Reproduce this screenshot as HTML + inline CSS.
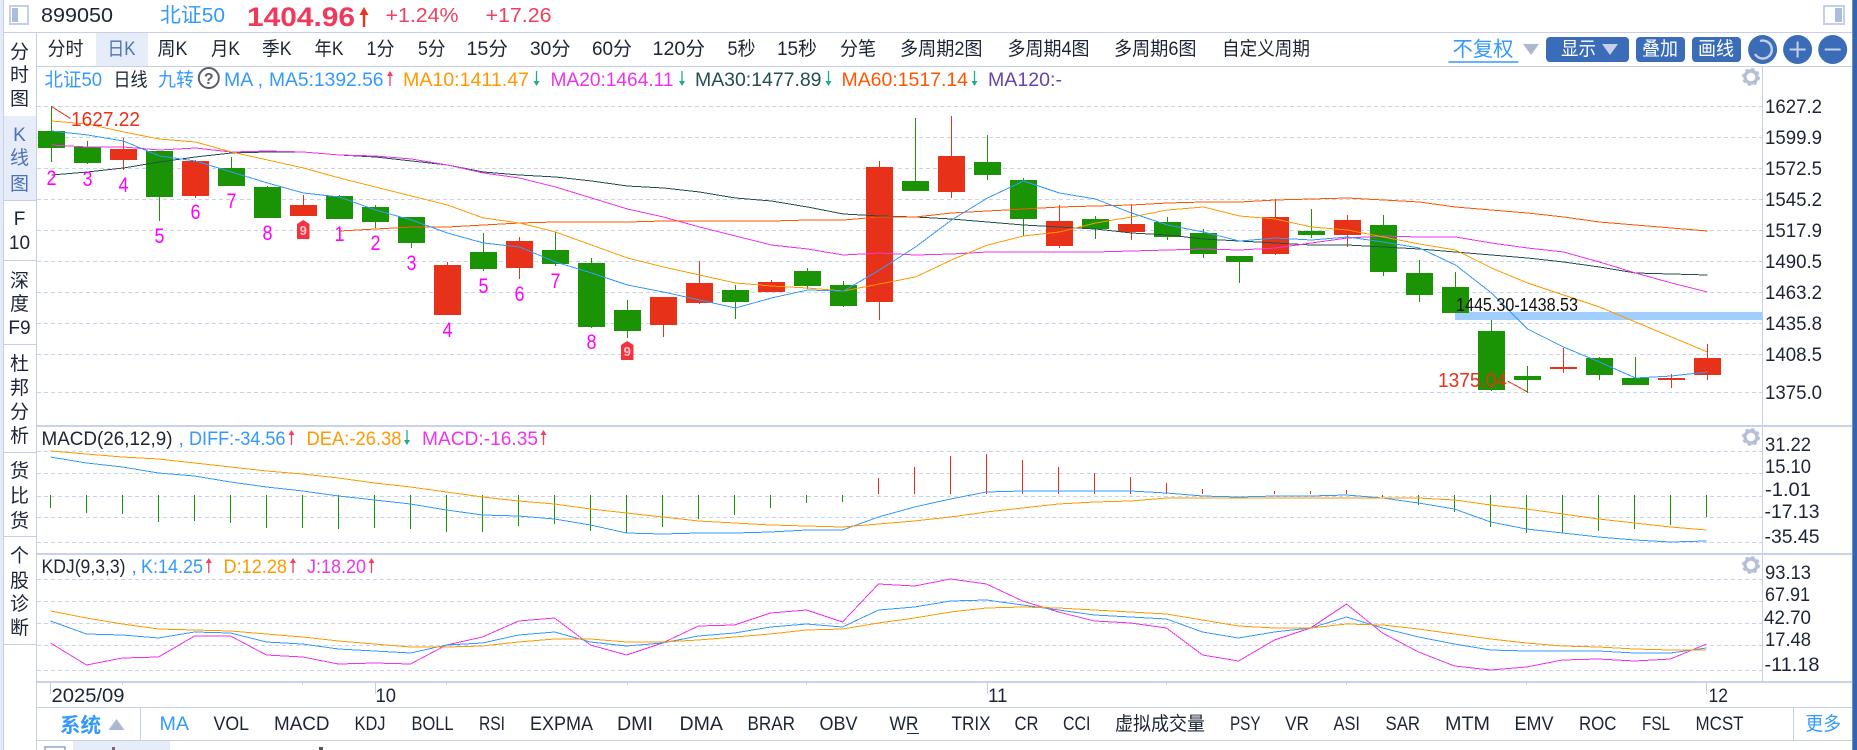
<!DOCTYPE html>
<html><head><meta charset="utf-8"><title>北证50</title>
<style>
html,body{margin:0;padding:0;background:#fff;width:1857px;height:750px;overflow:hidden}
svg{display:block}
text{font-family:"Liberation Sans","Noto Sans CJK SC",sans-serif;font-size:19px;fill:#1c2536}
.b{fill:#3399ff}.o{fill:#ff9900}.m{fill:#ee33ee}.w{fill:#fff}.n{fill:#ff00ff;font-size:21px}
.s{font-size:19px;text-anchor:middle}
</style></head><body>
<svg width="1857" height="750" viewBox="0 0 1857 750" xmlns="http://www.w3.org/2000/svg">
<defs>
<g id="u"><path d="M0 1V15" stroke="#f0405f" stroke-width="1.3"/><path d="M-3 5L0 0L3 5z" fill="#f0405f"/></g>
<g id="d"><path d="M0 0V14" stroke="#22a98c" stroke-width="1.3"/><path d="M-3 10L0 15L3 10z" fill="#22a98c"/></g>
<g id="gear"><circle r="6" fill="none" stroke="#b5c0d6" stroke-width="3.4"/><circle r="8" fill="none" stroke="#b5c0d6" stroke-width="2" stroke-dasharray="3.2 3.08"/></g>
</defs>
<rect width="1857" height="750" fill="#fff"/>
<!-- frame -->
<rect x="0" y="0" width="3" height="750" fill="#e4ebf8"/>
<rect x="1852" y="0" width="5" height="750" fill="#3564ae"/>
<rect x="1852" y="0" width="1" height="750" fill="#6d8ec6"/>
<path d="M3 32.5H1852M37 66.5H1852M36.5 33V750M3 200.5H36M3 260.5H36M3 344.5H36M3 452.5H36M3 536.5H36M3 644.5H36M3.5 0V750M37 707.5H1852M37 740.5H1852M140.5 708V740M1793.5 708V740M1762.5 67V682" stroke="#c5d0e6" stroke-width="1" fill="none" shape-rendering="crispEdges"/>
<rect x="4" y="116" width="32" height="84" fill="#e6ecf8"/>
<rect x="96" y="33" width="52" height="33" fill="#e6ecf8"/>
<rect x="73" y="741" width="97" height="9" fill="#e6ecf8"/>
<rect x="45" y="747" width="20" height="5" fill="none" stroke="#8fa3c8" stroke-width="1.5"/>
<rect x="112" y="747" width="3" height="3" fill="#7a6a70"/><rect x="319" y="747" width="4" height="3" fill="#555"/>
<!-- header -->
<rect x="10" y="6" width="18" height="18" fill="#fff" stroke="#c5d0e6" stroke-width="2"/><rect x="12" y="8" width="6" height="14" fill="#a9bedd"/>
<text x="41" y="22" style="font-size:20.5px" textLength="72" lengthAdjust="spacingAndGlyphs">899050</text>
<text x="160" y="22" class="b" style="font-size:20.5px" textLength="65" lengthAdjust="spacingAndGlyphs">北证50</text>
<text x="247" y="26" style="font-size:27px;font-weight:bold;fill:#f03a5c" textLength="108" lengthAdjust="spacingAndGlyphs">1404.96</text>
<path d="M364 12V27" stroke="#e8341c" stroke-width="2.4"/><path d="M359.5 15L364 7L368.5 15z" fill="#e8341c"/>
<text x="385.5" y="22" style="font-size:20.5px;fill:#f0405f" textLength="73" lengthAdjust="spacingAndGlyphs">+1.24%</text>
<text x="485.5" y="22" style="font-size:20.5px;fill:#f0405f" textLength="66" lengthAdjust="spacingAndGlyphs">+17.26</text>
<rect x="1824" y="6" width="20" height="18" fill="#fff" stroke="#c5d0e6" stroke-width="2"/><rect x="1835" y="8" width="7" height="14" fill="#a9bedd"/>
<!-- sidebar -->
<g>
<text class="s" x="19.5" y="58">分</text><text class="s" x="19.5" y="81">时</text><text class="s" x="19.5" y="105">图</text>
<text class="s" x="19.5" y="141" style="fill:#4a72b8">K</text><text class="s" x="19.5" y="164" style="fill:#4a72b8">线</text><text class="s" x="19.5" y="190" style="fill:#4a72b8">图</text>
<text class="s" x="19.5" y="225">F</text><text class="s" x="19.5" y="249">10</text>
<text class="s" x="19.5" y="287">深</text><text class="s" x="19.5" y="310">度</text><text class="s" x="19.5" y="334">F9</text>
<text class="s" x="19.5" y="370">杜</text><text class="s" x="19.5" y="394">邦</text><text class="s" x="19.5" y="418">分</text><text class="s" x="19.5" y="442">析</text>
<text class="s" x="19.5" y="477">货</text><text class="s" x="19.5" y="502">比</text><text class="s" x="19.5" y="527">货</text>
<text class="s" x="19.5" y="562">个</text><text class="s" x="19.5" y="587">股</text><text class="s" x="19.5" y="610">诊</text><text class="s" x="19.5" y="634">断</text>
</g>
<!-- toolbar -->
<g>
<text x="47.5" y="55" textLength="36" lengthAdjust="spacingAndGlyphs">分时</text>
<text x="107.5" y="55" textLength="28" lengthAdjust="spacingAndGlyphs" style="fill:#4a72b8">日K</text>
<text x="157.5" y="55" textLength="30" lengthAdjust="spacingAndGlyphs">周K</text>
<text x="211" y="55" textLength="29" lengthAdjust="spacingAndGlyphs">月K</text>
<text x="262" y="55" textLength="29.5" lengthAdjust="spacingAndGlyphs">季K</text>
<text x="314.5" y="55" textLength="29" lengthAdjust="spacingAndGlyphs">年K</text>
<text x="366.5" y="55" textLength="28" lengthAdjust="spacingAndGlyphs">1分</text>
<text x="418" y="55" textLength="27.5" lengthAdjust="spacingAndGlyphs">5分</text>
<text x="466.5" y="55" textLength="41.5" lengthAdjust="spacingAndGlyphs">15分</text>
<text x="530" y="55" textLength="40.5" lengthAdjust="spacingAndGlyphs">30分</text>
<text x="592" y="55" textLength="40" lengthAdjust="spacingAndGlyphs">60分</text>
<text x="652.5" y="55" textLength="52.5" lengthAdjust="spacingAndGlyphs">120分</text>
<text x="727.5" y="55" textLength="28" lengthAdjust="spacingAndGlyphs">5秒</text>
<text x="777" y="55" textLength="40" lengthAdjust="spacingAndGlyphs">15秒</text>
<text x="840" y="55" textLength="36" lengthAdjust="spacingAndGlyphs">分笔</text>
<text x="900" y="55" textLength="82.5" lengthAdjust="spacingAndGlyphs">多周期2图</text>
<text x="1007.5" y="55" textLength="82" lengthAdjust="spacingAndGlyphs">多周期4图</text>
<text x="1114" y="55" textLength="82.5" lengthAdjust="spacingAndGlyphs">多周期6图</text>
<text x="1222" y="55" textLength="88" lengthAdjust="spacingAndGlyphs">自定义周期</text>
<text x="1452.5" y="56" class="b" style="font-size:20.5px" textLength="61" lengthAdjust="spacingAndGlyphs">不复权</text>
</g>
<path d="M1448.5 62H1518.5" stroke="#3399ff" stroke-width="1.4"/>
<path d="M1523 44H1539L1531 55z" fill="#aab8d4"/>
<rect x="1546" y="37" width="83" height="25" rx="4" fill="#3a6cb8"/>
<text x="1561" y="55" class="w" textLength="35" lengthAdjust="spacingAndGlyphs">显示</text>
<path d="M1602 44H1618L1610 55z" fill="#c5d0e6"/>
<rect x="1636" y="37" width="49" height="25" rx="4" fill="#3a6cb8"/>
<text x="1642" y="55" class="w" textLength="36" lengthAdjust="spacingAndGlyphs">叠加</text>
<rect x="1692" y="37" width="49" height="25" rx="4" fill="#3a6cb8"/>
<text x="1698" y="55" class="w" textLength="36" lengthAdjust="spacingAndGlyphs">画线</text>
<circle cx="1762.6" cy="49.5" r="14.5" fill="#3a6cb8"/><circle cx="1797.6" cy="49.5" r="14.5" fill="#3a6cb8"/><circle cx="1832.7" cy="49.5" r="14.5" fill="#3a6cb8"/>
<path d="M1760 41A9 9 0 1 1 1755 54" fill="none" stroke="#c5d0e6" stroke-width="2.4"/>
<path d="M1789.6 49.5H1805.6M1797.6 41.5V57.5M1824.7 49.5H1840.7" stroke="#c5d0e6" stroke-width="2"/>
<!-- grid -->
<path d="M37 106.5H1762M37 137.5H1762M37 168.5H1762M37 199.5H1762M37 230.5H1762M37 261.5H1762M37 292.5H1762M37 323.5H1762M37 354.5H1762M37 392.5H1762M37 451.5H1762M37 473.5H1762M37 496.5H1762M37 517.5H1762M37 542.5H1762M37 579.5H1762M37 601.5H1762M37 623.5H1762M37 645.5H1762M37 670.5H1762" stroke="#c8d2e8" stroke-width="1" stroke-dasharray="4 3" fill="none" shape-rendering="crispEdges"/>
<!-- highlight band -->
<rect x="1455" y="312" width="307.5" height="8" fill="#a0ceff"/>
<!-- wicks -->
<path shape-rendering="crispEdges" fill="none" stroke="#1a9404" stroke-width="1" d="M51.5 106V162M87.5 141V164M159.5 151V221M231.5 157V186M267.5 186V218M339.5 195V219M375.5 205V228M411.5 217V248M483.5 233V271M555.5 232V266M591.5 258V328M627.5 300V338M735.5 285V319M807.5 268V289M843.5 281V307M915.5 118V191M987.5 135V180M1023.5 178V236M1095.5 216V239M1167.5 217V240M1203.5 229V258M1239.5 256V283M1311.5 209V238M1383.5 215V276M1419.5 260V302M1455.5 272V313M1491.5 320V391M1527.5 366V393M1599.5 357V380M1635.5 357V385"/>
<path shape-rendering="crispEdges" fill="none" stroke="#e73119" stroke-width="1" d="M123.5 138V170M195.5 160V198M303.5 195V216M447.5 262V315M519.5 237V279M663.5 297V337M699.5 261V304M771.5 280V292M879.5 161V320M951.5 116V198M1059.5 205V248M1131.5 204V240M1275.5 199V255M1347.5 215V247M1563.5 348V373M1671.5 374V388M1707.5 344V380"/>
<!-- bodies -->
<path fill="#1a9404" shape-rendering="crispEdges" d="M38 131h27v17h-27zM74 147h27v16h-27zM146 151h27v46h-27zM218 168h27v18h-27zM254 187h27v31h-27zM326 196h27v23h-27zM362 207h27v15h-27zM398 217h27v26h-27zM470 252h27v17h-27zM542 250h27v14h-27zM578 263h27v64h-27zM614 310h27v21h-27zM722 290h27v12h-27zM794 271h27v15h-27zM830 285h27v21h-27zM902 181h27v10h-27zM974 162h27v13h-27zM1010 180h27v39h-27zM1082 219h27v10h-27zM1154 222h27v15h-27zM1190 233h27v21h-27zM1226 256h27v6h-27zM1298 231h27v4h-27zM1370 225h27v47h-27zM1406 273h27v22h-27zM1442 287h27v26h-27zM1478 331h27v59h-27zM1514 376h27v4h-27zM1586 358h27v17h-27zM1622 378h27v7h-27z"/>
<path fill="#e73119" shape-rendering="crispEdges" d="M110 149h27v11h-27zM182 161h27v35h-27zM290 205h27v11h-27zM434 265h27v50h-27zM506 241h27v27h-27zM650 297h27v28h-27zM686 283h27v20h-27zM758 282h27v10h-27zM866 167h27v135h-27zM938 156h27v36h-27zM1046 221h27v25h-27zM1118 224h27v8h-27zM1262 217h27v37h-27zM1334 220h27v15h-27zM1550 367h27v2h-27zM1658 378h27v2h-27zM1694 358h27v17h-27z"/>
<!-- MA lines -->
<g fill="none" stroke-width="1" shape-rendering="crispEdges">
<polyline stroke="#224f50" points="51.5,175 87.5,172 123.5,168 159.5,162 195.5,157 231.5,153 267.5,152 303.5,152 339.5,155 375.5,157 411.5,161 447.5,165 483.5,172 519.5,175 555.5,177 591.5,181 627.5,186 663.5,188 699.5,192 735.5,198 771.5,201 807.5,207 843.5,214 879.5,216 915.5,217 951.5,219 987.5,222 1023.5,225 1059.5,227 1095.5,229 1131.5,233 1167.5,235 1203.5,239 1239.5,241 1275.5,243 1311.5,245 1347.5,245 1383.5,247 1419.5,249 1455.5,252 1491.5,255 1527.5,258 1563.5,262 1599.5,267 1635.5,273 1671.5,274 1707.5,275"/>
<polyline stroke="#ee33ee" points="51.5,145 87.5,147 123.5,147 159.5,150 195.5,148 231.5,152 267.5,151 303.5,152 339.5,155 375.5,156 411.5,159 447.5,165 483.5,173 519.5,178 555.5,187 591.5,198 627.5,209 663.5,217 699.5,227 735.5,236 771.5,245 807.5,249 843.5,255 879.5,253 915.5,255 951.5,254 987.5,252 1023.5,252 1059.5,252 1095.5,252 1131.5,251 1167.5,250 1203.5,249 1239.5,250 1275.5,248 1311.5,243 1347.5,238 1383.5,236 1419.5,237 1455.5,237 1491.5,243 1527.5,248 1563.5,252 1599.5,262 1635.5,273 1671.5,283 1707.5,292"/>
<polyline stroke="#ff5500" points="339.5,231 375.5,229 411.5,227 447.5,227 483.5,225 519.5,223 555.5,222 591.5,222 627.5,222 663.5,221 699.5,221 735.5,221 771.5,221 807.5,220 843.5,220 879.5,217 915.5,217 951.5,213 987.5,211 1023.5,209 1059.5,207 1095.5,206 1131.5,205 1167.5,203 1203.5,202 1239.5,202 1275.5,200 1311.5,199 1347.5,198 1383.5,200 1419.5,202 1455.5,207 1491.5,210 1527.5,213 1563.5,217 1599.5,222 1635.5,225 1671.5,228 1707.5,231"/>
<polyline stroke="#ff9900" points="51.5,121 87.5,124 123.5,132 159.5,139 195.5,142 231.5,152 267.5,160 303.5,168 339.5,178 375.5,187 411.5,196 447.5,205 483.5,218 519.5,223 555.5,232 591.5,245 627.5,258 663.5,267 699.5,275 735.5,283 771.5,286 807.5,288 843.5,291 879.5,284 915.5,277 951.5,260 987.5,245 1023.5,236 1059.5,232 1095.5,223 1131.5,217 1167.5,210 1203.5,207 1239.5,216 1275.5,219 1311.5,227 1347.5,230 1383.5,237 1419.5,244 1455.5,250 1491.5,268 1527.5,283 1563.5,295 1599.5,307 1635.5,322 1671.5,337 1707.5,352"/>
<polyline stroke="#3399ff" points="51.5,131 87.5,135 123.5,141 159.5,156 195.5,161 231.5,172 267.5,183 303.5,193 339.5,197 375.5,210 411.5,220 447.5,233 483.5,243 519.5,247 555.5,262 591.5,273 627.5,285 663.5,292 699.5,300 735.5,308 771.5,298 807.5,290 843.5,291 879.5,270 915.5,247 951.5,220 987.5,198 1023.5,181 1059.5,193 1095.5,199 1131.5,213 1167.5,225 1203.5,232 1239.5,241 1275.5,238 1311.5,240 1347.5,237 1383.5,242 1419.5,248 1455.5,265 1491.5,293 1527.5,329 1563.5,347 1599.5,362 1635.5,378 1671.5,376 1707.5,372"/>
</g>
<!-- MACD bars -->
<path shape-rendering="crispEdges" fill="none" stroke="#1a9404" stroke-width="1" d="M50.5 495V508M86.5 495V513M122.5 495V514M158.5 495V522M194.5 495V521M230.5 495V523M266.5 495V528M302.5 495V528M338.5 495V529M374.5 495V528M410.5 495V529M446.5 495V532M482.5 495V532M518.5 495V526M554.5 495V524M590.5 495V531M626.5 495V533M662.5 495V527M698.5 495V519M734.5 495V515M770.5 495V508M806.5 495V503M842.5 495V502M1382.5 495V497M1418.5 495V505M1454.5 495V512M1490.5 495V527M1526.5 495V533M1562.5 495V533M1598.5 495V531M1634.5 495V529M1670.5 495V525M1706.5 495V517"/>
<path shape-rendering="crispEdges" fill="none" stroke="#e73119" stroke-width="1" d="M878.5 478V494M914.5 467V494M950.5 456V494M986.5 454V494M1022.5 460V494M1058.5 467V494M1094.5 473V494M1130.5 477V494M1166.5 483V494M1202.5 489V494M1274.5 491V494M1310.5 491V494M1346.5 490V494"/>
<g fill="none" stroke-width="1" shape-rendering="crispEdges">
<polyline stroke="#3399ff" points="50.5,457 86.5,463 122.5,467 158.5,473 194.5,476 230.5,482 266.5,487 302.5,491 338.5,496 374.5,500 410.5,504 446.5,510 482.5,515 518.5,516 554.5,519 590.5,525 626.5,533 662.5,534 698.5,533 734.5,533 770.5,532 806.5,530 842.5,530 878.5,517 914.5,507 950.5,499 986.5,492 1022.5,491 1058.5,491 1094.5,491 1130.5,491 1166.5,493 1202.5,496 1238.5,497 1274.5,496 1310.5,496 1346.5,495 1382.5,498 1418.5,503 1454.5,509 1490.5,522 1526.5,529 1562.5,533 1598.5,537 1634.5,540 1670.5,542 1706.5,541"/>
<polyline stroke="#ff9900" points="50.5,451 86.5,454 122.5,457 158.5,459 194.5,463 230.5,467 266.5,471 302.5,474 338.5,478 374.5,483 410.5,487 446.5,492 482.5,497 518.5,501 554.5,504 590.5,509 626.5,513 662.5,517 698.5,521 734.5,523 770.5,525 806.5,526 842.5,527 878.5,524 914.5,521 950.5,517 986.5,512 1022.5,508 1058.5,504 1094.5,502 1130.5,501 1166.5,498 1202.5,498 1238.5,498 1274.5,498 1310.5,498 1346.5,498 1382.5,498 1418.5,498 1454.5,500 1490.5,505 1526.5,509 1562.5,514 1598.5,519 1634.5,523 1670.5,527 1706.5,530"/>
<polyline stroke="#ee33ee" points="50.5,643 86.5,665 122.5,658 158.5,657 194.5,636 230.5,636 266.5,655 302.5,657 338.5,664 374.5,663 410.5,664 446.5,645 482.5,637 518.5,621 554.5,618 590.5,645 626.5,655 662.5,643 698.5,626 734.5,625 770.5,613 806.5,610 842.5,622 878.5,584 914.5,586 950.5,579 986.5,584 1022.5,601 1058.5,612 1094.5,621 1130.5,623 1166.5,628 1202.5,655 1238.5,661 1274.5,640 1310.5,628 1346.5,604 1382.5,633 1418.5,652 1454.5,666 1490.5,670 1526.5,667 1562.5,660 1598.5,659 1634.5,661 1670.5,659 1706.5,644"/>
<polyline stroke="#3399ff" points="50.5,621 86.5,634 122.5,635 158.5,638 194.5,632 230.5,633 266.5,642 302.5,644 338.5,649 374.5,651 410.5,653 446.5,645 482.5,643 518.5,635 554.5,632 590.5,642 626.5,646 662.5,643 698.5,636 734.5,633 770.5,627 806.5,624 842.5,627 878.5,610 914.5,607 950.5,601 986.5,600 1022.5,605 1058.5,610 1094.5,615 1130.5,617 1166.5,619 1202.5,632 1238.5,638 1274.5,632 1310.5,628 1346.5,617 1382.5,628 1418.5,637 1454.5,644 1490.5,650 1526.5,651 1562.5,651 1598.5,651 1634.5,653 1670.5,653 1706.5,648"/>
<polyline stroke="#ff9900" points="50.5,611 86.5,618 122.5,624 158.5,629 194.5,630 230.5,631 266.5,634 302.5,637 338.5,641 374.5,644 410.5,647 446.5,647 482.5,646 518.5,642 554.5,639 590.5,639 626.5,642 662.5,642 698.5,640 734.5,637 770.5,634 806.5,630 842.5,629 878.5,623 914.5,618 950.5,612 986.5,608 1022.5,607 1058.5,608 1094.5,610 1130.5,612 1166.5,614 1202.5,620 1238.5,626 1274.5,628 1310.5,628 1346.5,624 1382.5,625 1418.5,629 1454.5,634 1490.5,639 1526.5,643 1562.5,646 1598.5,647 1634.5,649 1670.5,650 1706.5,650"/>
</g>
<!-- high/low -->
<path d="M51.5 106.5L70.5 118.5M1507.5 381L1527.5 392" stroke="#e73119" stroke-width="1" fill="none" shape-rendering="crispEdges"/>
<text x="71" y="126" style="font-size:20px;fill:#e73119" textLength="69" lengthAdjust="spacingAndGlyphs">1627.22</text>
<text x="1438" y="387" style="font-size:20px;fill:#e73119" textLength="69" lengthAdjust="spacingAndGlyphs">1375.04</text>
<text x="1456" y="311" style="fill:#111;font-size:18px" textLength="122" lengthAdjust="spacingAndGlyphs">1445.30-1438.53</text>
<!-- TD numbers -->
<text class="n" x="46.5" y="185" textLength="10" lengthAdjust="spacingAndGlyphs">2</text><text class="n" x="82.5" y="186" textLength="10" lengthAdjust="spacingAndGlyphs">3</text><text class="n" x="118.5" y="192" textLength="10" lengthAdjust="spacingAndGlyphs">4</text><text class="n" x="154.5" y="243" textLength="10" lengthAdjust="spacingAndGlyphs">5</text><text class="n" x="190.5" y="219" textLength="10" lengthAdjust="spacingAndGlyphs">6</text><text class="n" x="226.5" y="208" textLength="10" lengthAdjust="spacingAndGlyphs">7</text><text class="n" x="262.5" y="240" textLength="10" lengthAdjust="spacingAndGlyphs">8</text>
<text class="n" x="334.5" y="241" textLength="10" lengthAdjust="spacingAndGlyphs">1</text><text class="n" x="370.5" y="250" textLength="10" lengthAdjust="spacingAndGlyphs">2</text><text class="n" x="406.5" y="270" textLength="10" lengthAdjust="spacingAndGlyphs">3</text><text class="n" x="442.5" y="337" textLength="10" lengthAdjust="spacingAndGlyphs">4</text><text class="n" x="478.5" y="293" textLength="10" lengthAdjust="spacingAndGlyphs">5</text><text class="n" x="514.5" y="301" textLength="10" lengthAdjust="spacingAndGlyphs">6</text><text class="n" x="550.5" y="288" textLength="10" lengthAdjust="spacingAndGlyphs">7</text><text class="n" x="586.5" y="349" textLength="10" lengthAdjust="spacingAndGlyphs">8</text>
<path d="M297 224L303.2 220L309.5 224V239H297z" fill="#f5323f"/>
<text x="303.2" y="235" style="font-size:13px;fill:#ffc7cc;text-anchor:middle;font-weight:bold">9</text>
<path d="M621 345L627.2 341L633.5 345V360H621z" fill="#f5323f"/>
<text x="627.2" y="356" style="font-size:13px;fill:#ffc7cc;text-anchor:middle;font-weight:bold">9</text>
<!-- legend row -->
<text x="44.5" y="86" class="b" textLength="57.5" lengthAdjust="spacingAndGlyphs">北证50</text>
<text x="113.5" y="86" textLength="34" lengthAdjust="spacingAndGlyphs">日线</text>
<text x="158" y="86" class="b" textLength="36" lengthAdjust="spacingAndGlyphs">九转</text>
<circle cx="208.8" cy="78" r="10" fill="none" stroke="#5a5f68" stroke-width="2"/>
<text x="208.8" y="84" style="font-size:16px;fill:#5a5f68;text-anchor:middle;font-weight:bold">?</text>
<text x="224" y="86" class="b" textLength="39" lengthAdjust="spacingAndGlyphs">MA ,</text>
<text x="269" y="86" class="b" textLength="114.5" lengthAdjust="spacingAndGlyphs">MA5:1392.56</text>
<use href="#u" x="390" y="71"/>
<text x="403" y="86" class="o" textLength="126" lengthAdjust="spacingAndGlyphs">MA10:1411.47</text>
<use href="#d" x="536.5" y="71"/>
<text x="550.5" y="86" class="m" textLength="123" lengthAdjust="spacingAndGlyphs">MA20:1464.11</text>
<use href="#d" x="682" y="71"/>
<text x="695" y="86" style="fill:#224f50" textLength="126.5" lengthAdjust="spacingAndGlyphs">MA30:1477.89</text>
<use href="#d" x="828.5" y="71"/>
<text x="841.5" y="86" style="fill:#ff5500" textLength="126.5" lengthAdjust="spacingAndGlyphs">MA60:1517.14</text>
<use href="#d" x="974.5" y="71"/>
<text x="988" y="86" style="fill:#6644aa" textLength="74" lengthAdjust="spacingAndGlyphs">MA120:-</text>
<!-- gears -->
<use href="#gear" x="1751" y="77"/><use href="#gear" x="1751" y="437"/><use href="#gear" x="1751" y="565"/>
<!-- axis labels -->
<g>
<text x="1765" y="113" textLength="57" lengthAdjust="spacingAndGlyphs">1627.2</text><text x="1765" y="144" textLength="57" lengthAdjust="spacingAndGlyphs">1599.9</text><text x="1765" y="175" textLength="57" lengthAdjust="spacingAndGlyphs">1572.5</text><text x="1765" y="206" textLength="57" lengthAdjust="spacingAndGlyphs">1545.2</text><text x="1765" y="237" textLength="57" lengthAdjust="spacingAndGlyphs">1517.9</text><text x="1765" y="268" textLength="57" lengthAdjust="spacingAndGlyphs">1490.5</text><text x="1765" y="299" textLength="57" lengthAdjust="spacingAndGlyphs">1463.2</text><text x="1765" y="330" textLength="57" lengthAdjust="spacingAndGlyphs">1435.8</text><text x="1765" y="361" textLength="57" lengthAdjust="spacingAndGlyphs">1408.5</text><text x="1765" y="399" textLength="57" lengthAdjust="spacingAndGlyphs">1375.0</text>
<text x="1765" y="451" textLength="46" lengthAdjust="spacingAndGlyphs">31.22</text><text x="1765" y="473" textLength="46" lengthAdjust="spacingAndGlyphs">15.10</text><text x="1765" y="496" textLength="46" lengthAdjust="spacingAndGlyphs">-1.01</text><text x="1764.5" y="518" textLength="55" lengthAdjust="spacingAndGlyphs">-17.13</text><text x="1764.5" y="543" textLength="55" lengthAdjust="spacingAndGlyphs">-35.45</text>
<text x="1765" y="579" textLength="46" lengthAdjust="spacingAndGlyphs">93.13</text><text x="1765" y="601" textLength="45" lengthAdjust="spacingAndGlyphs">67.91</text><text x="1764" y="624" textLength="47" lengthAdjust="spacingAndGlyphs">42.70</text><text x="1765" y="646" textLength="46" lengthAdjust="spacingAndGlyphs">17.48</text><text x="1764.5" y="671" textLength="55" lengthAdjust="spacingAndGlyphs">-11.18</text>
</g>
<!-- separators -->
<path d="M37 426H1852M37 554H1852M37 682H1852" stroke="#c8d2e8" stroke-width="2" shape-rendering="crispEdges"/>
<!-- MACD title -->
<text x="41.5" y="445" textLength="131" lengthAdjust="spacingAndGlyphs">MACD(26,12,9)</text>
<text x="178.5" y="445" class="b">,</text>
<text x="189" y="445" class="b" textLength="96.5" lengthAdjust="spacingAndGlyphs">DIFF:-34.56</text><use href="#u" x="291.5" y="430"/>
<text x="306.5" y="445" class="o" textLength="95" lengthAdjust="spacingAndGlyphs">DEA:-26.38</text><use href="#d" x="407" y="430"/>
<text x="422" y="445" class="m" textLength="116" lengthAdjust="spacingAndGlyphs">MACD:-16.35</text><use href="#u" x="543.5" y="430"/>
<!-- KDJ title -->
<text x="41.5" y="573" textLength="84" lengthAdjust="spacingAndGlyphs">KDJ(9,3,3)</text>
<text x="131.5" y="573" class="b">,</text>
<text x="141" y="573" class="b" textLength="62" lengthAdjust="spacingAndGlyphs">K:14.25</text><use href="#u" x="208.8" y="558"/>
<text x="223.5" y="573" class="o" textLength="63.5" lengthAdjust="spacingAndGlyphs">D:12.28</text><use href="#u" x="293" y="558"/>
<text x="307" y="573" class="m" textLength="59" lengthAdjust="spacingAndGlyphs">J:18.20</text><use href="#u" x="371.5" y="558"/>
<!-- date axis -->
<path shape-rendering="crispEdges" stroke="#c5d0e6" stroke-width="1" fill="none" d="M50.5 683V694M375.5 683V694M987.5 683V694M1706.5 683V694M122.5 683V685M302.5 683V685M446.5 683V685M627.5 683V685M806.5 683V685M1166.5 683V685M1346.5 683V685M1526.5 683V685"/>
<text x="51.5" y="702" textLength="73" lengthAdjust="spacingAndGlyphs">2025/09</text>
<text x="375.5" y="702" textLength="20.5" lengthAdjust="spacingAndGlyphs">10</text>
<text x="988" y="702" textLength="19.5" lengthAdjust="spacingAndGlyphs">11</text>
<text x="1708.5" y="702" textLength="19.5" lengthAdjust="spacingAndGlyphs">12</text>
<!-- tab bar -->
<text x="60" y="732" style="font-size:20px;font-weight:bold;fill:#3399ff" textLength="41" lengthAdjust="spacingAndGlyphs">系统</text>
<path d="M108.5 730H124.5L116.5 719z" fill="#aab8d4"/>
<g>
<text x="159.5" y="730" class="b" textLength="29.5" lengthAdjust="spacingAndGlyphs">MA</text>
<text x="213.5" y="730" textLength="35.5" lengthAdjust="spacingAndGlyphs">VOL</text>
<text x="274" y="730" textLength="55.5" lengthAdjust="spacingAndGlyphs">MACD</text>
<text x="354.5" y="730" textLength="31" lengthAdjust="spacingAndGlyphs">KDJ</text>
<text x="411.5" y="730" textLength="42" lengthAdjust="spacingAndGlyphs">BOLL</text>
<text x="479" y="730" textLength="26" lengthAdjust="spacingAndGlyphs">RSI</text>
<text x="530" y="730" textLength="63" lengthAdjust="spacingAndGlyphs">EXPMA</text>
<text x="617" y="730" textLength="36" lengthAdjust="spacingAndGlyphs">DMI</text>
<text x="679.5" y="730" textLength="43.5" lengthAdjust="spacingAndGlyphs">DMA</text>
<text x="747.5" y="730" textLength="47.5" lengthAdjust="spacingAndGlyphs">BRAR</text>
<text x="819.5" y="730" textLength="38" lengthAdjust="spacingAndGlyphs">OBV</text>
<text x="889.5" y="730" textLength="29" lengthAdjust="spacingAndGlyphs">WR</text>
<path d="M907 733.5H919" stroke="#1c2536" stroke-width="1"/>
<text x="951.5" y="730" textLength="39" lengthAdjust="spacingAndGlyphs">TRIX</text>
<text x="1014.5" y="730" textLength="24" lengthAdjust="spacingAndGlyphs">CR</text>
<text x="1063" y="730" textLength="27.5" lengthAdjust="spacingAndGlyphs">CCI</text>
<text x="1115" y="730" textLength="90" lengthAdjust="spacingAndGlyphs">虚拟成交量</text>
<text x="1230" y="730" textLength="30.5" lengthAdjust="spacingAndGlyphs">PSY</text>
<text x="1285" y="730" textLength="24" lengthAdjust="spacingAndGlyphs">VR</text>
<text x="1333.5" y="730" textLength="26.5" lengthAdjust="spacingAndGlyphs">ASI</text>
<text x="1385.5" y="730" textLength="34.5" lengthAdjust="spacingAndGlyphs">SAR</text>
<text x="1445" y="730" textLength="45" lengthAdjust="spacingAndGlyphs">MTM</text>
<text x="1514.5" y="730" textLength="39" lengthAdjust="spacingAndGlyphs">EMV</text>
<text x="1579" y="730" textLength="37.5" lengthAdjust="spacingAndGlyphs">ROC</text>
<text x="1642" y="730" textLength="28" lengthAdjust="spacingAndGlyphs">FSL</text>
<text x="1695.5" y="730" textLength="48" lengthAdjust="spacingAndGlyphs">MCST</text>
<text x="1805.5" y="730" class="b" textLength="35.5" lengthAdjust="spacingAndGlyphs">更多</text>
</g>
</svg>
</body></html>
